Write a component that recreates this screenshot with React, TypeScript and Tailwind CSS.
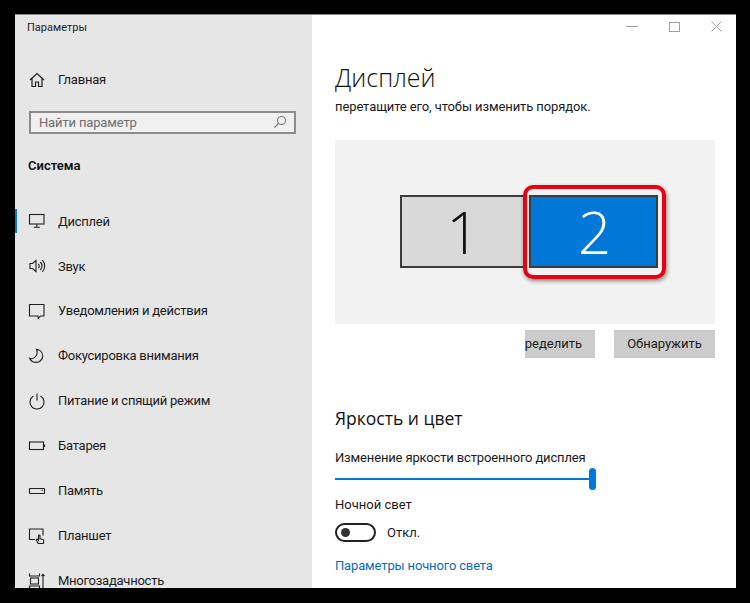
const font = "font-['Roboto','Open_Sans',sans-serif]";

function Ico({ children }: { children: React.ReactNode }) {
  return (
    <svg width="18" height="18" viewBox="0 0 18 18" fill="none" stroke="#1f1f1f" strokeWidth="1.1" className="shrink-0">
      {children}
    </svg>
  );
}

const navItems = [
  {
    label: "Дисплей",
    icon: (
      <Ico>
        <rect x="1.5" y="2.5" width="14.5" height="9.5" />
        <path d="M8.8 12v3M5.8 15.2h6" />
      </Ico>
    ),
  },
  {
    label: "Звук",
    icon: (
      <Ico>
        <path d="M2 6.5h2.5L8 3.5v11l-3.5-3H2z" />
        <path d="M10.3 6.8a3 3 0 0 1 0 4.4M12.3 5a5.6 5.6 0 0 1 0 8M14.3 3.2a8.2 8.2 0 0 1 0 11.6" />
      </Ico>
    ),
  },
  {
    label: "Уведомления и действия",
    icon: (
      <Ico>
        <path d="M1.5 2.5h14.5v11.5h-3.5l-2.2 2.4-.3-2.4H1.5z" />
      </Ico>
    ),
  },
  {
    label: "Фокусировка внимания",
    icon: (
      <Ico>
        <path d="M8.5 2.2c3 .6 6.5 3 6.2 7.2-.3 3.6-3.3 6-6.6 6-2.8 0-5.2-1.6-6.4-4 4.5 1.4 9-3.4 6.8-9.2z" />
      </Ico>
    ),
  },
  {
    label: "Питание и спящий режим",
    icon: (
      <Ico>
        <path d="M5.5 4a7 7 0 1 0 7 0M9 1.5v7" />
      </Ico>
    ),
  },
  {
    label: "Батарея",
    icon: (
      <Ico>
        <rect x="1.5" y="5" width="14" height="7.5" />
        <path d="M16.6 7.5v2.5" />
      </Ico>
    ),
  },
  {
    label: "Память",
    icon: (
      <Ico>
        <rect x="1.5" y="6.5" width="15" height="5" rx="0.6" />
        <path d="M13.5 8.3h1.5" />
      </Ico>
    ),
  },
  {
    label: "Планшет",
    icon: (
      <Ico>
        <path d="M7 12.5H1.5V2h13.5v6.5" />
        <path d="M10.2 16.5 8.4 13.2c-.4-.8.5-1.4 1.2-.7l.9 1V8.8c0-1 1.5-1 1.5 0v3l3 .7c.7.2.9.8.8 1.4l-.5 2.6z" />
      </Ico>
    ),
  },
  {
    label: "Многозадачность",
    icon: (
      <Ico>
        <path d="M1.5 1.5v2.5h10V1.5M1.5 16.5V14h10v2.5" />
        <rect x="2.5" y="6" width="8" height="6" />
        <path d="M15 2v14M13.5 4 15 2.3 16.5 4" />
      </Ico>
    ),
  },
];

export default function App() {
  return (
    <div className={`h-[603px] w-[750px] overflow-hidden bg-black pt-[14px] pl-[15px] ${font}`}>
      <div className="flex h-[574px] w-[721px] border-t border-[#8a8a8a] bg-white">
        {/* sidebar */}
        <div className="flex h-full w-[297px] shrink-0 flex-col overflow-hidden bg-[#e6e6e6] text-[#1a1a1a]">
          <div className="mt-[5px] pl-[12px] text-[11px] leading-[16px] text-[#222]">Параметры</div>
          <div className="mt-[34px] flex h-[24px] items-center pl-[14px] text-[13px] tracking-[-0.2px]">
            <svg width="16" height="16" viewBox="0 0 16 16" fill="none" stroke="#1f1f1f" strokeWidth="1.2">
              <path d="M1 8 8 1.5 15 8M3 6.5V14.5h3.5V10h3v4.5H13V6.5" />
            </svg>
            <span className="ml-[13px]">Главная</span>
          </div>
          <div className="mt-[21px] ml-[14px] flex h-[29px] w-[267px] items-center justify-between border-2 border-[#8c8c8c] bg-[#f0f0f0] pr-[7px] pl-[8px] text-[13px] tracking-[-0.15px] text-[#6e6e6e]">
            <span>Найти параметр</span>
            <svg width="14" height="14" viewBox="0 0 14 14" fill="none" stroke="#777" strokeWidth="1.1">
              <circle cx="8.5" cy="5.5" r="4" />
              <path d="M5.5 8.5 1.5 12.5" />
            </svg>
          </div>
          <div className="mt-[22px] h-[20px] pl-[13px] text-[13px] leading-[20px] font-semibold text-[#111]">Система</div>
          <div className="mt-[23px] flex flex-col">
            {navItems.map((item, index) => (
              <div key={index} className="relative flex h-[44.9px] shrink-0 items-center pl-[13px] text-[13px] tracking-[-0.25px]">
                {index === 0 && <div className="absolute top-[10px] left-0 h-[24px] w-[2px] bg-[#0078d7]" />}
                {item.icon}
                <span className="ml-[12px] whitespace-nowrap">{item.label}</span>
              </div>
            ))}
          </div>
        </div>

        {/* main */}
        <div className="relative flex min-w-0 flex-1 flex-col pl-[23px] text-[#1a1a1a]">
          <div className="absolute top-[6px] right-[14px] flex items-center gap-[31px]">
            <div className="h-px w-[12px] bg-[#a0a0a0]" />
            <div className="h-[10px] w-[11px] border border-[#a0a0a0]" />
            <svg width="11" height="11" viewBox="0 0 11 11" stroke="#a0a0a0" strokeWidth="1">
              <path d="M.5.5l10 10M10.5.5l-10 10" />
            </svg>
          </div>
          <h1 className="mt-[42px] font-['Open_Sans',sans-serif] text-[25px] leading-[40px] font-light text-[#111]">Дисплей</h1>
          <p className="mt-[1px] text-[13px] leading-[18px] tracking-[-0.1px]">перетащите его, чтобы изменить порядок.</p>
          <div className="relative mt-[24px] flex h-[184px] w-[380px] shrink-0 items-center bg-[#f2f2f2] pb-[2px] pl-[65px]">
            <div className="flex h-[73px] w-[126px] items-center justify-center border-2 border-[#3c3c3c] bg-[#d9d9d9] font-['Open_Sans',sans-serif] text-[58px] font-light text-[#111]">
              1
            </div>
            <div className="ml-[3px] flex h-[73px] w-[129px] items-center justify-center border-2 border-[#3c3c3c] bg-[#0078d7] pl-[2px] font-['Open_Sans',sans-serif] text-[58px] font-light text-white">
              2
            </div>
            <div className="absolute top-[45px] left-[188px] h-[94px] w-[143px] rounded-[10px] border-4 border-[#e60012] shadow-[1px_2px_4px_rgba(0,0,0,0.45)]" />
          </div>
          <div className="mt-[6px] flex w-[380px] justify-end gap-[19px] text-[13px]">
            <div className="flex h-[28px] w-[70px] items-center justify-end overflow-hidden bg-[#cccccc] pr-[13px] whitespace-nowrap">
              Определить
            </div>
            <div className="flex h-[28px] w-[101px] items-center justify-center bg-[#cccccc] whitespace-nowrap">
              Обнаружить
            </div>
          </div>
          <h2 className="mt-[46px] font-['Open_Sans',sans-serif] text-[17.5px] leading-[28px] text-[#111]">Яркость и цвет</h2>
          <div className="mt-[17px] text-[13px] leading-[18px] tracking-[-0.15px]">Изменение яркости встроенного дисплея</div>
          <div className="relative mt-[1px] flex h-[22px] w-[262px] items-center">
            <div className="h-[2px] w-[258px] bg-[#0078d7]" />
            <div className="absolute top-0 left-[254px] h-[22px] w-[7px] rounded-full bg-[#0078d7]" />
          </div>
          <div className="mt-[6px] text-[13px] leading-[18px]">Ночной свет</div>
          <div className="mt-[9px] flex items-center text-[13px]">
            <div className="flex h-[19px] w-[41px] items-center rounded-full border-2 border-[#222] pl-[4px]">
              <div className="h-[9px] w-[9px] rounded-full bg-[#333]" />
            </div>
            <span className="ml-[11px]">Откл.</span>
          </div>
          <a className="mt-[14px] text-[13px] leading-[18px] tracking-[-0.15px] text-[#0a6cbd]">Параметры ночного света</a>
        </div>
      </div>
    </div>
  );
}
